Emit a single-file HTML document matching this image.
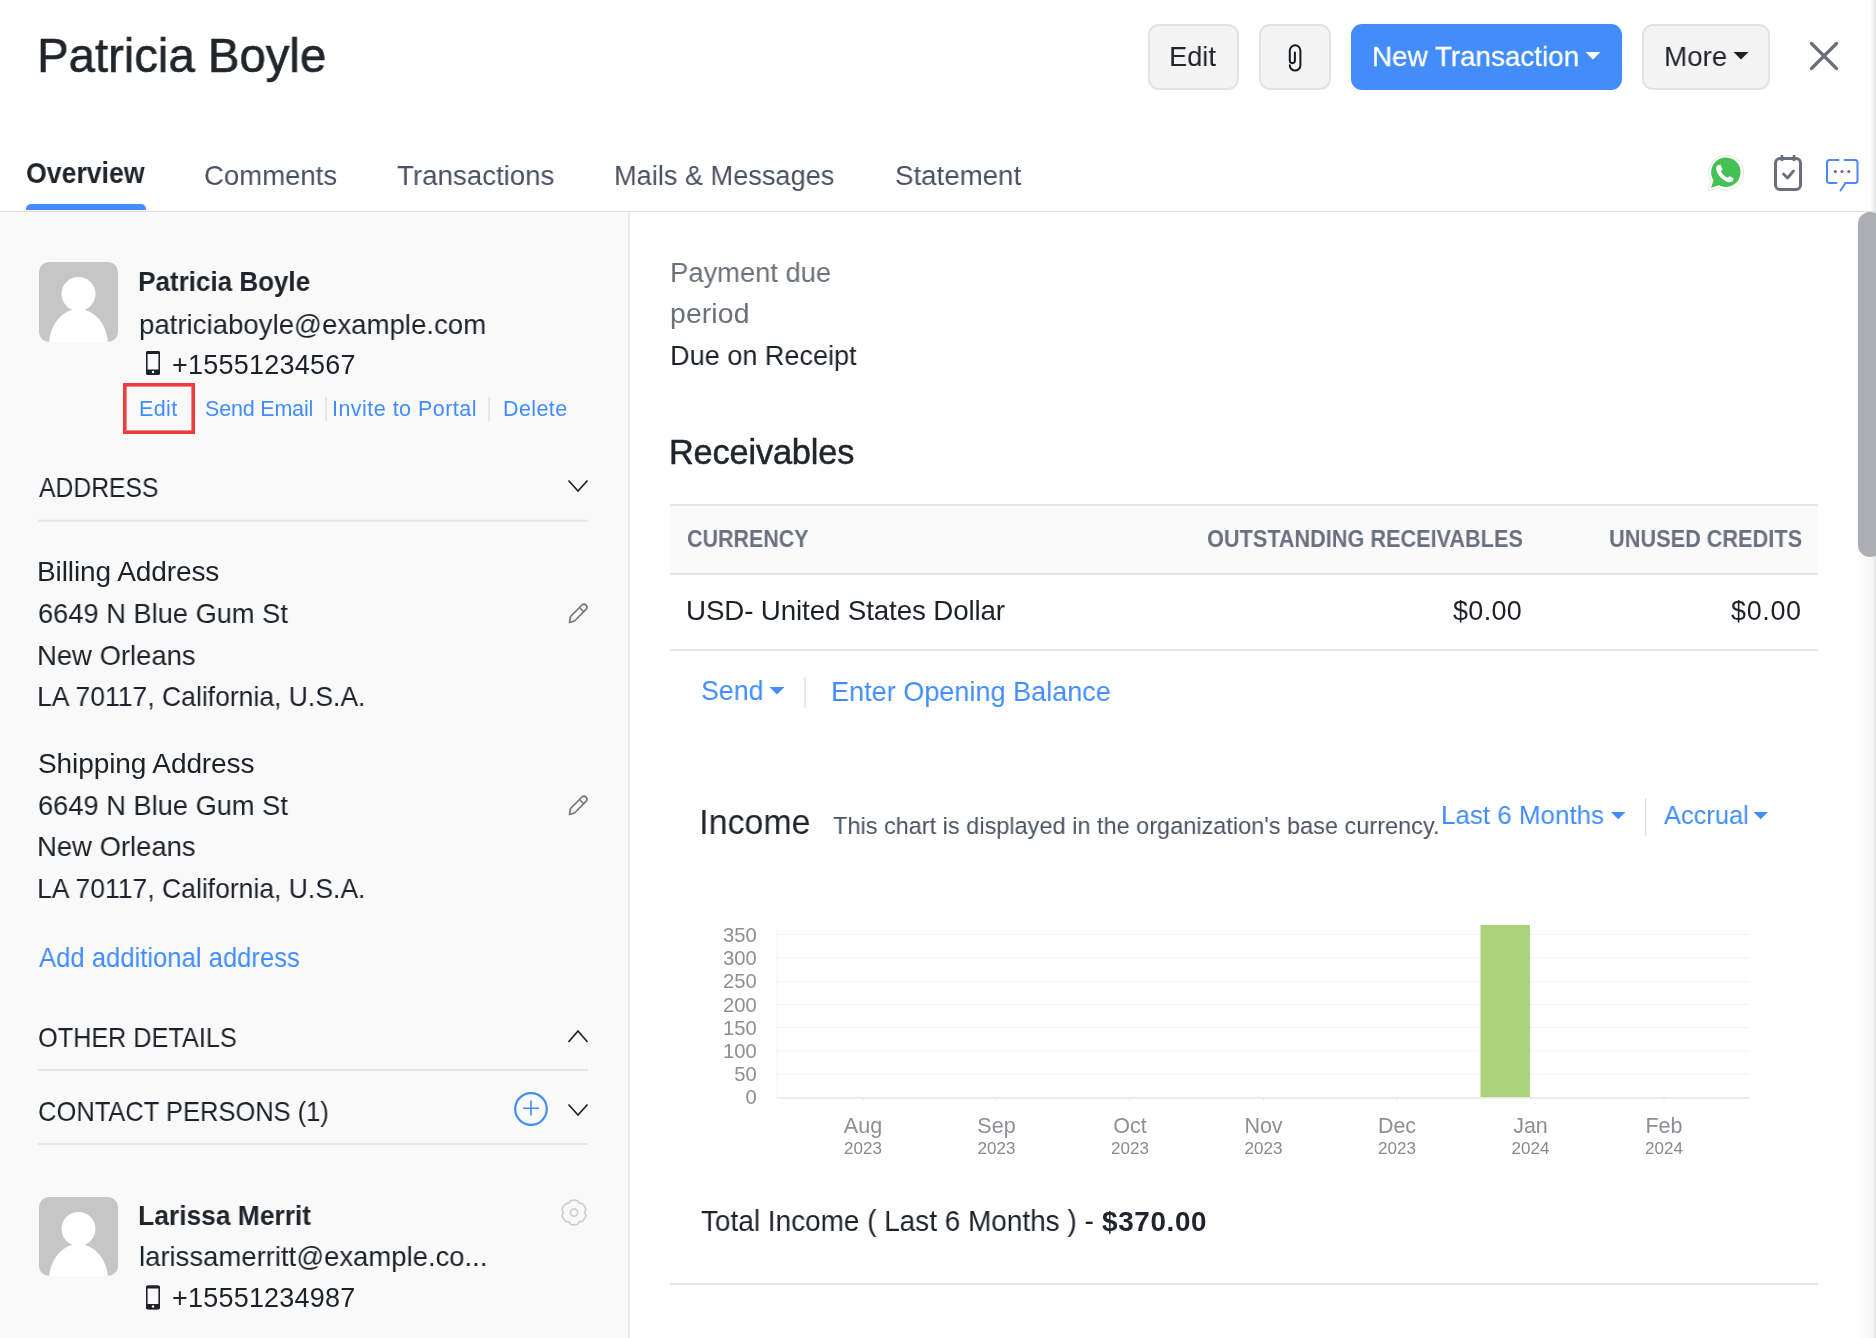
<!DOCTYPE html>
<html><head><meta charset="utf-8">
<style>
html,body{margin:0;padding:0;width:1876px;height:1338px;overflow:hidden;background:#fff;position:relative;font-family:"Liberation Sans",sans-serif;}
.t{position:absolute;white-space:pre;font-family:"Liberation Sans",sans-serif;will-change:transform;}
.a{position:absolute;}
.btn{position:absolute;box-sizing:border-box;border:2px solid #e3e3e6;background:#f4f4f5;border-radius:11px;}
.hr{position:absolute;height:2px;background:#e6e6e8;}
svg{position:absolute;overflow:visible;}
</style></head><body>
<!-- left panel bg -->
<div class="a" style="left:0;top:212px;width:628px;height:1126px;background:#f9f9fa;"></div>
<div class="a" style="left:628px;top:212px;width:2px;height:1126px;background:#e9e9eb;"></div>
<!-- tab border -->
<div class="a" style="left:0;top:211px;width:1876px;height:1px;background:#dedee1;"></div>
<!-- tab underline -->
<div class="a" style="left:26px;top:204px;width:120px;height:6px;background:#408dfb;border-radius:5px 5px 0 0;"></div>

<!-- header buttons -->
<div class="btn" style="left:1148px;top:24px;width:91px;height:66px;"></div>
<div class="btn" style="left:1259px;top:24px;width:72px;height:66px;"></div>
<div class="a" style="left:1351px;top:24px;width:271px;height:66px;background:#428dfa;border-radius:11px;"></div>
<div class="btn" style="left:1642px;top:24px;width:128px;height:66px;"></div>
<!-- carets -->
<svg style="left:0;top:0" width="1876" height="120">
  <path d="M1585.5 52 L1600.5 52 L1593 59.5 Z" fill="#fff"/>
  <path d="M1733.5 52 L1748.5 52 L1741 59.5 Z" fill="#1d2128"/>
  <!-- close -->
  <path d="M1811.5 43.5 L1836.5 68.5 M1836.5 43.5 L1811.5 68.5" stroke="#6b6f7a" stroke-width="3.2" stroke-linecap="round" fill="none"/>
  <!-- paperclip -->
  <path d="M1294.9 52.5 L1294.9 60.6 A2.55 2.55 0 0 1 1289.8 60.6 L1289.8 50.6 A5.3 5.3 0 0 1 1300.4 50.6 L1300.4 65.3 A5.3 5.3 0 0 1 1289.8 65.3" stroke="#16191f" stroke-width="2" fill="none" stroke-linecap="round"/>
</svg>

<!-- header right icons -->
<svg style="left:0;top:0" width="1876" height="220">
  <!-- whatsapp -->
  <path transform="translate(0,0.8)" d="M1708 190 L1711 180.5 A17.5 17.5 0 1 1 1717.5 187 Z" fill="#fff" stroke="#e6e6e6" stroke-width="1"/>
  <path transform="translate(0,0.8)" d="M1711 187 L1713.5 179.5 A14.8 14.8 0 1 1 1719 184.5 Z" fill="#45c153"/>
  <path transform="translate(0,0.8)" d="M1717.5 164.5 C1716 166 1715.5 168.5 1717 171.5 C1719 175.5 1722.5 179 1727 181 C1729.5 182 1731.5 181.5 1733 180 L1733.5 177.5 L1729.5 175.5 L1727.5 177 C1725 176 1722 173 1721 170.5 L1722.5 168.5 L1720.5 164 Z" fill="#fff"/>
  <!-- clipboard -->
  <rect x="1775.5" y="158.5" width="25" height="31" rx="4.5" fill="none" stroke="#6b6f7a" stroke-width="3"/>
  <path d="M1782 155 L1782 161 M1794 155 L1794 161" stroke="#6b6f7a" stroke-width="2.6"/>
  <path d="M1783.5 174 L1787.5 178 L1793.5 171" stroke="#6b6f7a" stroke-width="2.8" fill="none" stroke-linecap="round" stroke-linejoin="round"/>
  <!-- chat -->
  <path d="M1838.5 160 L1829.5 160 Q1827 160 1827 162.5 L1827 180.5 Q1827 183 1829.5 183 L1836.5 183 M1845 183 L1855 183 Q1857.5 183 1857.5 180.5 L1857.5 162.5 Q1857.5 160 1855 160 L1844.5 160 M1845.5 183 L1840.5 190.5" stroke="#4a8af4" stroke-width="2" fill="none" stroke-linecap="round"/>
  <circle cx="1835.3" cy="171.5" r="1.6" fill="#6b6f7a"/>
  <circle cx="1842" cy="171.5" r="1.6" fill="#6b6f7a"/>
  <circle cx="1848.8" cy="171.5" r="1.6" fill="#6b6f7a"/>
</svg>

<!-- avatar 1 -->
<div class="a" style="left:38.5px;top:262px;width:79px;height:79.5px;border-radius:10px;background:#c6c6c6;overflow:hidden;">
 <svg style="left:0;top:0" width="79" height="80"><circle cx="39.5" cy="32" r="17" fill="#fff"/><ellipse cx="39.5" cy="83" rx="29.5" ry="36" fill="#fff"/></svg>
</div>
<!-- avatar 2 -->
<div class="a" style="left:38.5px;top:1196.5px;width:79px;height:79px;border-radius:10px;background:#c6c6c6;overflow:hidden;">
 <svg style="left:0;top:0" width="79" height="80"><circle cx="39.5" cy="32" r="17" fill="#fff"/><ellipse cx="39.5" cy="83" rx="29.5" ry="36" fill="#fff"/></svg>
</div>

<svg style="left:0;top:0" width="640" height="1338">
  <!-- phone icons -->
  <g>
   <rect x="146.8" y="351.8" width="12.4" height="22.4" rx="2" fill="none" stroke="#1d2128" stroke-width="1.6"/>
   <rect x="146" y="351" width="14" height="3" rx="1.5" fill="#1d2128"/>
   <rect x="146" y="369.5" width="14" height="5.3" rx="1.5" fill="#1d2128"/>
   <circle cx="153" cy="372" r="1.2" fill="#fff"/>
  </g>
  <g transform="translate(0,934.5)">
   <rect x="146.8" y="351.8" width="12.4" height="22.4" rx="2" fill="none" stroke="#1d2128" stroke-width="1.6"/>
   <rect x="146" y="351" width="14" height="3" rx="1.5" fill="#1d2128"/>
   <rect x="146" y="369.5" width="14" height="5.3" rx="1.5" fill="#1d2128"/>
   <circle cx="153" cy="372" r="1.2" fill="#fff"/>
  </g>
<!-- red box -->
  <rect x="124.8" y="384.8" width="68.4" height="47.4" fill="none" stroke="#ef3b3b" stroke-width="3.6"/>
  <!-- separators -->
  <rect x="325.5" y="397" width="1.2" height="24" fill="#dcdcdf"/>
  <rect x="488.5" y="397" width="1.2" height="24" fill="#dcdcdf"/>
  <!-- chevrons -->
  <path d="M568.5 480.5 L578 491 L587.5 480.5" stroke="#1d2128" stroke-width="1.7" fill="none"/>
  <path d="M568.5 1042 L578 1031 L587.5 1042" stroke="#1d2128" stroke-width="1.7" fill="none"/>
  <path d="M568.5 1104.5 L578 1115 L587.5 1104.5" stroke="#1d2128" stroke-width="1.7" fill="none"/>
  <!-- dividers -->
  <rect x="38" y="519.7" width="550" height="2" fill="#e6e6e8"/>
  <rect x="38" y="1069" width="550" height="2" fill="#e6e6e8"/>
  <rect x="38" y="1143" width="550" height="2" fill="#e6e6e8"/>
  <!-- pencils -->
  <g id="pen" fill="none" stroke="#74777f" stroke-width="1.7" stroke-linejoin="round">
   <path d="M569.5 622.5 L570.5 616.5 L582 605 Q584 603.2 586 605.2 Q588 607.2 586.2 609.2 L574.5 621 Z"/>
   <path d="M579.5 607.5 L584 612"/>
  </g>
  <g fill="none" stroke="#74777f" stroke-width="1.7" stroke-linejoin="round" transform="translate(0,192)">
   <path d="M569.5 622.5 L570.5 616.5 L582 605 Q584 603.2 586 605.2 Q588 607.2 586.2 609.2 L574.5 621 Z"/>
   <path d="M579.5 607.5 L584 612"/>
  </g>
  <!-- plus circle -->
  <circle cx="531" cy="1109" r="15.8" fill="none" stroke="#408dfb" stroke-width="2.2"/>
  <path d="M531 1100.5 L531 1115.5 M523 1108.2 L539 1108.2" stroke="#408dfb" stroke-width="1.6"/>
  <!-- gear -->
  <g fill="none" stroke="#cfcfd3" stroke-width="1.7">
   <path d="M570.40 1200.74 A12.3 12.3 0 0 1 577.60 1200.74 Q578.80 1204.19 582.39 1203.50 A12.3 12.3 0 0 1 585.98 1209.73 Q583.60 1212.50 585.98 1215.27 A12.3 12.3 0 0 1 582.39 1221.50 Q578.80 1220.81 577.60 1224.26 A12.3 12.3 0 0 1 570.40 1224.26 Q569.20 1220.81 565.61 1221.50 A12.3 12.3 0 0 1 562.02 1215.27 Q564.40 1212.50 562.02 1209.73 A12.3 12.3 0 0 1 565.61 1203.50 Q569.20 1204.19 570.40 1200.74 Z" stroke-linejoin="round"/>
   <circle cx="574" cy="1212.5" r="3.6"/>
  </g>
</svg>

<!-- right panel: table -->
<div class="a" style="left:670px;top:505px;width:1148px;height:68px;background:#fafafa;"></div>
<div class="hr" style="left:670px;top:504px;width:1148px;"></div>
<div class="hr" style="left:670px;top:572.5px;width:1148px;"></div>
<div class="hr" style="left:670px;top:649px;width:1148px;"></div>
<svg style="left:0;top:0;will-change:transform" width="1876" height="1338">
  <path d="M769.5 687 L784.5 687 L777 694.5 Z" fill="#408dfb"/>
  <rect x="804.5" y="677" width="1.2" height="31" fill="#dcdcdf"/>
  <path d="M1611 812 L1625.5 812 L1618.2 819.3 Z" fill="#408dfb"/>
  <rect x="1645" y="798.5" width="1.2" height="37.5" fill="#dcdcdf"/>
  <path d="M1753.5 812 L1768 812 L1760.7 819.3 Z" fill="#408dfb"/>
  <!-- chart grid -->
  <g fill="#f4f4f5">
   <rect x="777" y="934" width="972" height="1"/>
   <rect x="777" y="957.5" width="972" height="1"/>
   <rect x="777" y="981" width="972" height="1"/>
   <rect x="777" y="1004" width="972" height="1"/>
   <rect x="777" y="1027" width="972" height="1"/>
   <rect x="777" y="1050.5" width="972" height="1"/>
   <rect x="777" y="1073.5" width="972" height="1"/>
   <rect x="776.5" y="926.5" width="1" height="171" fill="#f3f3f4"/>
  </g>
  <rect x="777" y="1097" width="972" height="1.6" fill="#e8e8ea"/>
  <g fill="#e0e0e2">
   <rect x="862.5" y="1098" width="1" height="2"/>
   <rect x="996" y="1098" width="1" height="2"/>
   <rect x="1129.5" y="1098" width="1" height="2"/>
   <rect x="1263" y="1098" width="1" height="2"/>
   <rect x="1396.5" y="1098" width="1" height="2"/>
   <rect x="1530" y="1098" width="1" height="2"/>
   <rect x="1663.5" y="1098" width="1" height="2"/>
  </g>
  <rect x="1480.5" y="925" width="49.5" height="172" fill="#abd37c"/>
  <g font-family="Liberation Sans" fill="#8e8f94" font-size="20.2" text-anchor="end">
   <text x="756.8" y="942">350</text>
   <text x="756.8" y="965">300</text>
   <text x="756.8" y="988">250</text>
   <text x="756.8" y="1011.5">200</text>
   <text x="756.8" y="1034.5">150</text>
   <text x="756.8" y="1057.5">100</text>
   <text x="756.8" y="1080.5">50</text>
   <text x="756.8" y="1104">0</text>
  </g>
  <g font-family="Liberation Sans" fill="#8e8f94" font-size="21.5" text-anchor="middle">
   <text x="863" y="1133">Aug</text>
   <text x="996.5" y="1133">Sep</text>
   <text x="1130" y="1133">Oct</text>
   <text x="1263.5" y="1133">Nov</text>
   <text x="1397" y="1133">Dec</text>
   <text x="1530.5" y="1133">Jan</text>
   <text x="1664" y="1133">Feb</text>
  </g>
  <g font-family="Liberation Sans" fill="#88898e" font-size="17" text-anchor="middle">
   <text x="863" y="1154">2023</text>
   <text x="996.5" y="1154">2023</text>
   <text x="1130" y="1154">2023</text>
   <text x="1263.5" y="1154">2023</text>
   <text x="1397" y="1154">2023</text>
   <text x="1530.5" y="1154">2024</text>
   <text x="1664" y="1154">2024</text>
  </g>
</svg>
<div class="a" style="left:670px;top:1283px;width:1148px;height:2px;background:#e3e3e5;"></div>

<!-- scrollbar -->
<div class="a" style="left:1857px;top:212px;width:19px;height:1126px;background:linear-gradient(to right,#fefefe,#f4f4f5);"></div>
<div class="a" style="left:1874px;top:212px;width:2px;height:1126px;background:#e6e6e8;"></div>
<div class="a" style="left:1858px;top:212px;width:24px;height:345px;background:#adadb5;border-radius:12px;"></div>
<div class="a" style="left:1870px;top:0;width:6px;height:211px;background:linear-gradient(to right,rgba(0,0,0,0),rgba(0,0,0,0.1));"></div>

<div class="t" style="left:36.8px;top:30.6px;font-size:48.66px;line-height:48.66px;font-weight:400;letter-spacing:0.000px;color:#21252b;transform:scaleX(0.9718);transform-origin:4.0px 0;-webkit-text-stroke:0.6px #21252b">Patricia Boyle</div>
<div class="t" style="left:1169.4px;top:41.8px;font-size:28.51px;line-height:28.51px;font-weight:400;letter-spacing:0.000px;color:#21252b;transform:scaleX(0.9532);transform-origin:2.0px 0;">Edit</div>
<div class="t" style="left:1372.4px;top:41.8px;font-size:28.51px;line-height:28.51px;font-weight:400;letter-spacing:0.000px;color:#fff;transform:scaleX(0.9756);transform-origin:2.0px 0;-webkit-text-stroke:0.3px #fff">New Transaction</div>
<div class="t" style="left:1664.0px;top:41.8px;font-size:28.51px;line-height:28.51px;font-weight:400;letter-spacing:0.000px;color:#21252b;transform:scaleX(0.9742);transform-origin:2.0px 0;">More</div>
<div class="t" style="left:26.0px;top:158.6px;font-size:28.66px;line-height:28.66px;font-weight:700;letter-spacing:0.000px;color:#21252b;transform:scaleX(0.9291);transform-origin:1.0px 0;">Overview</div>
<div class="t" style="left:204.0px;top:160.9px;font-size:28.36px;line-height:28.36px;font-weight:400;letter-spacing:0.000px;color:#4a5160;transform:scaleX(0.9704);transform-origin:1.0px 0;">Comments</div>
<div class="t" style="left:397.3px;top:160.9px;font-size:28.36px;line-height:28.36px;font-weight:400;letter-spacing:0.000px;color:#4a5160;transform:scaleX(0.9761);transform-origin:1.0px 0;">Transactions</div>
<div class="t" style="left:613.7px;top:160.9px;font-size:28.36px;line-height:28.36px;font-weight:400;letter-spacing:0.000px;color:#4a5160;transform:scaleX(0.9568);transform-origin:2.0px 0;">Mails &amp; Messages</div>
<div class="t" style="left:894.5px;top:160.9px;font-size:28.36px;line-height:28.36px;font-weight:400;letter-spacing:0.000px;color:#4a5160;transform:scaleX(0.9758);transform-origin:1.0px 0;">Statement</div>
<div class="t" style="left:138.3px;top:268.1px;font-size:28.06px;line-height:28.06px;font-weight:700;letter-spacing:0.000px;color:#21252b;transform:scaleX(0.9268);transform-origin:2.0px 0;">Patricia Boyle</div>
<div class="t" style="left:139.0px;top:309.5px;font-size:28.21px;line-height:28.21px;font-weight:400;letter-spacing:0.000px;color:#1d2128;transform:scaleX(0.9786);transform-origin:2.0px 0;">patriciaboyle@example.com</div>
<div class="t" style="left:172.0px;top:352.1px;font-size:26.96px;line-height:26.96px;font-weight:400;letter-spacing:0.255px;color:#1d2128;">+15551234567</div>
<div class="t" style="left:138.7px;top:399.2px;font-size:21.50px;line-height:21.50px;font-weight:400;letter-spacing:0.367px;color:#408dfb;">Edit</div>
<div class="t" style="left:205.0px;top:399.2px;font-size:21.50px;line-height:21.50px;font-weight:400;letter-spacing:-0.189px;color:#408dfb;">Send Email</div>
<div class="t" style="left:332.4px;top:399.2px;font-size:21.50px;line-height:21.50px;font-weight:400;letter-spacing:0.467px;color:#408dfb;">Invite to Portal</div>
<div class="t" style="left:503.0px;top:399.2px;font-size:21.50px;line-height:21.50px;font-weight:400;letter-spacing:0.400px;color:#408dfb;">Delete</div>
<div class="t" style="left:39.0px;top:475.1px;font-size:26.96px;line-height:26.96px;font-weight:400;letter-spacing:0.000px;color:#1d2128;transform:scaleX(0.9171);transform-origin:0.0px 0;">ADDRESS</div>
<div class="t" style="left:37.0px;top:558.4px;font-size:28.06px;line-height:28.06px;font-weight:400;letter-spacing:-0.114px;color:#1d2128;">Billing Address</div>
<div class="t" style="left:38.0px;top:600.1px;font-size:28.06px;line-height:28.06px;font-weight:400;letter-spacing:0.000px;color:#1d2128;transform:scaleX(0.9711);transform-origin:1.0px 0;">6649 N Blue Gum St</div>
<div class="t" style="left:37.0px;top:641.8px;font-size:28.06px;line-height:28.06px;font-weight:400;letter-spacing:0.000px;color:#1d2128;transform:scaleX(0.9780);transform-origin:2.0px 0;">New Orleans</div>
<div class="t" style="left:37.0px;top:683.4px;font-size:28.06px;line-height:28.06px;font-weight:400;letter-spacing:0.000px;color:#1d2128;transform:scaleX(0.9458);transform-origin:2.0px 0;">LA 70117, California, U.S.A.</div>
<div class="t" style="left:38.0px;top:750.1px;font-size:28.06px;line-height:28.06px;font-weight:400;letter-spacing:-0.120px;color:#1d2128;">Shipping Address</div>
<div class="t" style="left:38.0px;top:791.6px;font-size:28.06px;line-height:28.06px;font-weight:400;letter-spacing:0.000px;color:#1d2128;transform:scaleX(0.9711);transform-origin:1.0px 0;">6649 N Blue Gum St</div>
<div class="t" style="left:37.0px;top:833.4px;font-size:28.06px;line-height:28.06px;font-weight:400;letter-spacing:0.000px;color:#1d2128;transform:scaleX(0.9780);transform-origin:2.0px 0;">New Orleans</div>
<div class="t" style="left:37.0px;top:875.1px;font-size:28.06px;line-height:28.06px;font-weight:400;letter-spacing:0.000px;color:#1d2128;transform:scaleX(0.9458);transform-origin:2.0px 0;">LA 70117, California, U.S.A.</div>
<div class="t" style="left:39.0px;top:943.6px;font-size:28.06px;line-height:28.06px;font-weight:400;letter-spacing:0.000px;color:#408dfb;transform:scaleX(0.9141);transform-origin:0.0px 0;">Add additional address</div>
<div class="t" style="left:38.0px;top:1025.1px;font-size:26.96px;line-height:26.96px;font-weight:400;letter-spacing:0.000px;color:#1d2128;transform:scaleX(0.9362);transform-origin:1.0px 0;">OTHER DETAILS</div>
<div class="t" style="left:38.0px;top:1099.1px;font-size:26.96px;line-height:26.96px;font-weight:400;letter-spacing:0.000px;color:#1d2128;transform:scaleX(0.9456);transform-origin:1.0px 0;">CONTACT PERSONS (1)</div>
<div class="t" style="left:138.3px;top:1202.1px;font-size:28.06px;line-height:28.06px;font-weight:700;letter-spacing:0.000px;color:#21252b;transform:scaleX(0.9401);transform-origin:2.0px 0;">Larissa Merrit</div>
<div class="t" style="left:139.0px;top:1242.3px;font-size:28.21px;line-height:28.21px;font-weight:400;letter-spacing:0.000px;color:#1d2128;transform:scaleX(0.9737);transform-origin:2.0px 0;">larissamerritt@example.co...</div>
<div class="t" style="left:172.0px;top:1285.4px;font-size:26.96px;line-height:26.96px;font-weight:400;letter-spacing:0.236px;color:#1d2128;">+15551234987</div>
<div class="t" style="left:670.2px;top:258.2px;font-size:28.36px;line-height:28.36px;font-weight:400;letter-spacing:0.000px;color:#6c7079;transform:scaleX(0.9640);transform-origin:2.0px 0;">Payment due</div>
<div class="t" style="left:670.2px;top:299.4px;font-size:28.36px;line-height:28.36px;font-weight:400;letter-spacing:0.120px;color:#6c7079;">period</div>
<div class="t" style="left:670.2px;top:340.9px;font-size:28.36px;line-height:28.36px;font-weight:400;letter-spacing:0.000px;color:#1d2128;transform:scaleX(0.9544);transform-origin:2.0px 0;">Due on Receipt</div>
<div class="t" style="left:669.0px;top:435.1px;font-size:34.33px;line-height:34.33px;font-weight:400;letter-spacing:-0.170px;color:#21252b;-webkit-text-stroke:0.5px #21252b">Receivables</div>
<div class="t" style="left:686.7px;top:527.6px;font-size:23.19px;line-height:23.19px;font-weight:700;letter-spacing:0.000px;color:#6b7080;transform:scaleX(0.9238);transform-origin:1.0px 0;">CURRENCY</div>
<div class="t" style="left:1207.0px;top:527.6px;font-size:23.19px;line-height:23.19px;font-weight:700;letter-spacing:0.000px;color:#6b7080;transform:scaleX(0.9345);transform-origin:1.0px 0;">OUTSTANDING RECEIVABLES</div>
<div class="t" style="left:1609.0px;top:527.6px;font-size:23.19px;line-height:23.19px;font-weight:700;letter-spacing:0.000px;color:#6b7080;transform:scaleX(0.9363);transform-origin:1.0px 0;">UNUSED CREDITS</div>
<div class="t" style="left:685.7px;top:597.4px;font-size:27.77px;line-height:27.77px;font-weight:400;letter-spacing:-0.142px;color:#1d2128;">USD- United States Dollar</div>
<div class="t" style="left:1452.7px;top:598.1px;font-size:26.96px;line-height:26.96px;font-weight:400;letter-spacing:0.325px;color:#1d2128;">$0.00</div>
<div class="t" style="left:1731.4px;top:598.1px;font-size:26.96px;line-height:26.96px;font-weight:400;letter-spacing:0.650px;color:#1d2128;">$0.00</div>
<div class="t" style="left:701.0px;top:677.3px;font-size:27.91px;line-height:27.91px;font-weight:400;letter-spacing:0.000px;color:#408dfb;transform:scaleX(0.9571);transform-origin:1.0px 0;">Send</div>
<div class="t" style="left:830.8px;top:677.0px;font-size:28.21px;line-height:28.21px;font-weight:400;letter-spacing:0.000px;color:#408dfb;transform:scaleX(0.9592);transform-origin:2.0px 0;">Enter Opening Balance</div>
<div class="t" style="left:699.4px;top:804.8px;font-size:35.83px;line-height:35.83px;font-weight:400;letter-spacing:0.000px;color:#21252b;transform:scaleX(0.9478);transform-origin:3.0px 0;">Income</div>
<div class="t" style="left:832.9px;top:813.6px;font-size:24.78px;line-height:24.78px;font-weight:400;letter-spacing:0.000px;color:#4b5263;transform:scaleX(0.9493);transform-origin:0.0px 0;">This chart is displayed in the organization&#x27;s base currency.</div>
<div class="t" style="left:1441.4px;top:802.4px;font-size:26.57px;line-height:26.57px;font-weight:400;letter-spacing:0.000px;color:#408dfb;transform:scaleX(0.9768);transform-origin:2.0px 0;">Last 6 Months</div>
<div class="t" style="left:1663.7px;top:802.4px;font-size:26.57px;line-height:26.57px;font-weight:400;letter-spacing:0.000px;color:#408dfb;transform:scaleX(0.9563);transform-origin:0.0px 0;">Accrual</div>
<div class="t" style="left:700.7px;top:1206.9px;font-size:28.66px;line-height:28.66px;font-weight:400;letter-spacing:0.000px;color:#1d2128;transform:scaleX(0.9746);transform-origin:1.0px 0;">Total Income ( Last 6 Months ) - </div>
<div class="t" style="left:1102.0px;top:1207.6px;font-size:27.83px;line-height:27.83px;font-weight:700;letter-spacing:0.667px;color:#21252b;">$370.00</div>
</body></html>
